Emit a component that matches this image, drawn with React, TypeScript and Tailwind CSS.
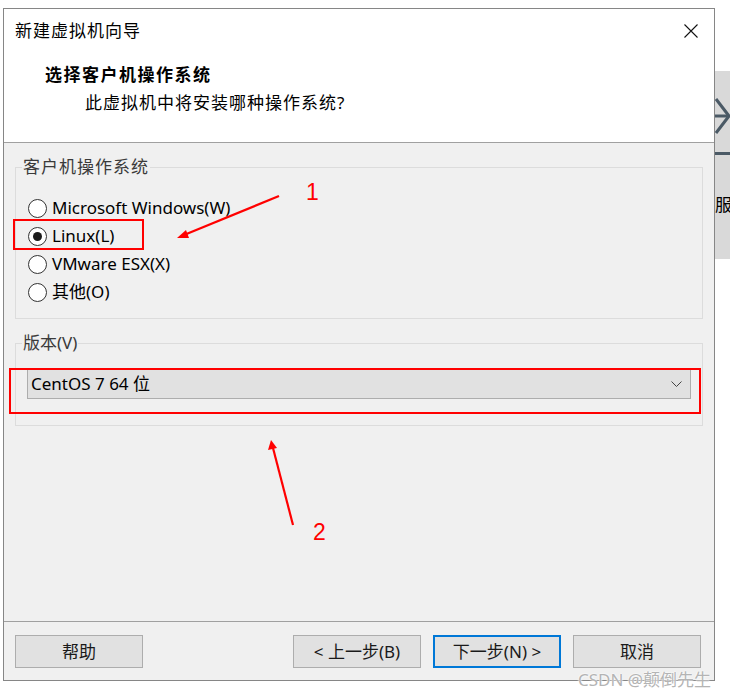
import React from "react";

const options = ["Microsoft Windows(W)", "Linux(L)", "VMware ESX(X)", "其他(O)"];

const Radio = ({ label, checked }: { label: string; checked?: boolean }) => {
  return (
    <div className="h-[28px] flex items-center">
      <div className="w-[19px] h-[19px] rounded-full border border-[#333] bg-white flex items-center justify-center">
        {checked && <div className="w-[9px] h-[9px] rounded-full bg-[#1a1a1a]" />}
      </div>
      <span className="ml-[5px] text-[17px] leading-[24px] text-black">{label}</span>
    </div>
  );
};

const WizardButton = ({
  label,
  primary,
}: {
  label: string;
  primary?: boolean;
}) => {
  return (
    <div
      className={
        primary
          ? "w-[128px] h-[33px] bg-[#e1e1e1] border-2 border-[#0078d7] flex items-center justify-center text-[17px] text-[#1a1a1a]"
          : "w-[128px] h-[33px] bg-[#e1e1e1] border border-[#adadad] flex items-center justify-center text-[17px] text-[#1a1a1a]"
      }
    >
      {label}
    </div>
  );
};

const App = () => {
  return (
    <div className="w-[730px] h-[698px] bg-white relative overflow-hidden flex items-start font-['Noto_Sans','Noto_Sans_CJK_SC',sans-serif]">
      {/* wizard dialog */}
      <div className="ml-[3px] mt-[8px] w-[712px] h-[673px] border border-[#868686] flex flex-col shrink-0">
        <div className="h-[134px] bg-white border-b border-[#a0a0a0] shrink-0">
          <div className="flex justify-between items-center pl-[11px] pr-[16px] pt-[10px] h-[34px]">
            <span className="text-[17px] leading-[24px] tracking-[1px] text-black">新建虚拟机向导</span>
            <svg width="14" height="14" viewBox="0 0 14 14">
              <path d="M0.5 0.5 L13.5 13.5 M13.5 0.5 L0.5 13.5" stroke="#111" strokeWidth="1.1" />
            </svg>
          </div>
          <div className="pl-[41px] mt-[20px] text-[17px] leading-[24px] tracking-[1.5px] font-bold text-black">
            选择客户机操作系统
          </div>
          <div className="pl-[81px] mt-[4px] text-[17px] leading-[24px] tracking-[1px] text-black">
            此虚拟机中将安装哪种操作系统?
          </div>
        </div>

        <div className="flex-1 bg-[#f0f0f0] px-[11px]">
          <fieldset className="mt-[12px] border border-[#dcdcdc]">
            <legend className="ml-[6px] px-[1px] text-[17px] leading-[24px] tracking-[1px] text-[#3a3a3a]">
              客户机操作系统
            </legend>
            <div className="pl-[12px] pt-[15px] pb-[12px]">
              {options.map((o) => (
                <Radio key={o} label={o} checked={o === "Linux(L)"} />
              ))}
            </div>
          </fieldset>

          <fieldset className="mt-[12px] border border-[#dcdcdc]">
            <legend className="ml-[6px] px-[1px] text-[17px] leading-[24px] text-[#3a3a3a]">
              版本(V)
            </legend>
            <div className="pl-[11px] pt-[14px] pb-[26px]">
              <div className="w-[664px] h-[30px] bg-[#e1e1e1] border border-[#adadad] flex items-center justify-between pl-[3px] pr-[8px]">
                <span className="text-[17px] leading-[24px] text-black">CentOS 7 64 位</span>
                <svg width="11" height="6" viewBox="0 0 11 6">
                  <polyline points="0.5,0.5 5.5,5.5 10.5,0.5" fill="none" stroke="#444" strokeWidth="1" />
                </svg>
              </div>
            </div>
          </fieldset>
        </div>

        <div className="h-[59px] bg-[#f0f0f0] border-t border-[#a0a0a0] flex items-start pt-[13px] pl-[11px] pr-[13px] shrink-0">
          <WizardButton label="帮助" />
          <div className="flex-1" />
          <div className="flex gap-[12px]">
            <WizardButton label="< 上一步(B)" />
            <WizardButton label="下一步(N) >" primary />
            <WizardButton label="取消" />
          </div>
        </div>
      </div>

      {/* window behind the dialog, cut off by the right edge */}
      <div className="mt-[71px] w-[15px] h-[188px] bg-[#d9d9d9] shrink-0 overflow-hidden flex flex-col">
        <svg width="15" height="40" viewBox="0 0 15 40" className="mt-[27px]">
          <polyline points="1,1 14,18 1,35" fill="none" stroke="#4b5a66" strokeWidth="3" />
          <line x1="0" y1="18" x2="14" y2="18" stroke="#4b5a66" strokeWidth="3" />
        </svg>
        <div className="mt-[14px] h-[3px] bg-[#4b5a66]" />
        <div className="mt-[38px] text-[17px] leading-[24px] text-black whitespace-nowrap">服</div>
      </div>

      {/* red annotations */}
      <div className="absolute left-[13px] top-[219px] w-[131px] h-[31px] border-2 border-[#ff0000]" />
      <div className="absolute left-[9px] top-[368px] w-[692px] h-[46px] border-2 border-[#ff0000]" />
      <svg className="absolute left-0 top-0 pointer-events-none" width="730" height="698" viewBox="0 0 730 698">
        <line x1="279" y1="196" x2="184" y2="235" stroke="#ff0000" strokeWidth="2.2" />
        <polygon points="177,238 186,230 189,238" fill="#ff0000" />
        <line x1="293" y1="525" x2="273" y2="448" stroke="#ff0000" strokeWidth="2.2" />
        <polygon points="271,440 268,450 277,448" fill="#ff0000" />
      </svg>
      <span className="absolute left-[306px] top-[178px] text-[23px] leading-[28px] text-[#ff0000] font-['Liberation_Sans',sans-serif]">
        1
      </span>
      <span className="absolute left-[313px] top-[518px] text-[23px] leading-[28px] text-[#ff0000] font-['Liberation_Sans',sans-serif]">
        2
      </span>

      {/* watermark */}
      <span className="absolute left-[578px] top-[668px] text-[17px] leading-[24px] text-[#b4b4b4] [text-shadow:0_0_2px_#fff,0_0_2px_#fff]">
        CSDN @颠倒先生
      </span>
    </div>
  );
};

export default App;
